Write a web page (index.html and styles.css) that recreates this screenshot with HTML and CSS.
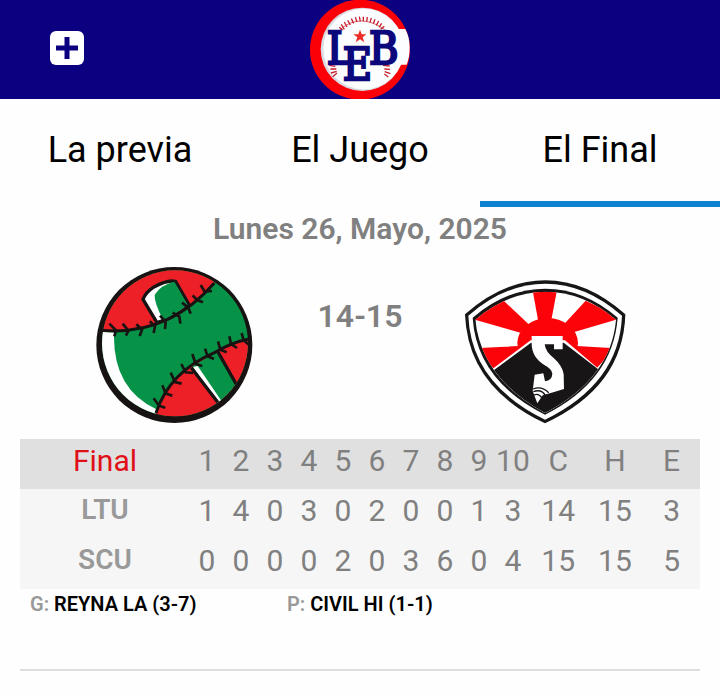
FILE: index.html
```html
<!DOCTYPE html>
<html lang="es">
<head>
<meta charset="utf-8">
<meta name="viewport" content="width=device-width, initial-scale=1">
<title>El Final</title>
<link rel="stylesheet" href="styles.css">
</head>
<body>
<header class="topbar">
  <button class="add" type="button" aria-label="Agregar">
    <svg viewBox="0 0 34 34" width="34" height="34" aria-hidden="true">
      <rect width="34" height="34" rx="6" fill="#fff"/>
      <path d="M17 6v22M6 17h22" stroke="#0a0080" stroke-width="5"/>
    </svg>
  </button>
  <svg class="league" viewBox="0 0 360 297" width="120" height="99" role="img" aria-label="LEB">
    <circle cx="180" cy="149" r="150" fill="#fb0006"/>
    <circle cx="187" cy="148" r="125" fill="#d9dbe3"/>
    <circle cx="191" cy="147" r="121" fill="#fcfdfe"/>
    <path d="M270 87H316Q329 112 329 142Q329 172 320 194H270Z" fill="#fcfdfe"/>
    <path d="M121 88Q180 38 254 88" fill="none" stroke="#c8202c" stroke-width="2"/>
    <g class="stitch">
      <path d="M118 82l10 9M124 73l9 15M133 66l8 15M143 61l8 14M154 56l7 14M166 52l5 14M178 50l3 14M190 50l0 14M202 51l-2 14M214 54l-4 13M225 58l-5 13M236 63l-7 13M245 70l-8 12M253 79l-11 9"/>
      <path d="M88 196l18 3M91 207l18 0M93 219l17-5M98 230l13-11M249 196l20 2M253 207l17 1M254 215l17 6M253 222l12 9"/>
    </g>
    <path d="M180 89l5 14h14l-11 9 5 15-13-9-13 9 5-15-12-9h15z" fill="#f02b25"/>
    <g class="monogram">
      <text x="80" y="191" font-size="134">L</text>
      <text x="207" y="191" font-size="134">B</text>
      <text x="128" y="241" font-size="134">E</text>
    </g>
  </svg>
</header>

<nav class="tabs" aria-label="Secciones del juego">
  <a class="tab" href="#previa">La previa</a>
  <a class="tab" href="#juego">El Juego</a>
  <a class="tab active" href="#final" aria-current="page">El Final</a>
</nav>

<main id="final" class="game">
  <h1 class="date">Lunes 26, Mayo, 2025</h1>

  <section class="matchup">
    <svg class="team" viewBox="0 0 540 540" role="img" aria-label="LTU">
      <defs><clipPath id="ball"><circle cx="270" cy="265" r="219"/></clipPath></defs>
      <circle cx="268" cy="270" r="234" fill="#171312"/>
      <g clip-path="url(#ball)">
        <rect x="30" y="30" width="480" height="480" fill="#079347"/>
        <path d="M30 226V30H388V84Q250 243 50 226Z" fill="#ed2027"/>
        <path d="M30 230L87 232Q82 400 213 462L209 500H30Z" fill="#fff"/>
        <path d="M213 474C240 390 300 330 390 292Q440 262 493 252H520V510H213Z" fill="#ed2027"/>
        <path d="M321 335L399 288L470 410L410 460Z" fill="#079347"/>
        <path d="M324 336L338 333L411 440L400 450Z" fill="#fff"/>
        <path d="M216 203L174 133Q182 112 205 97Q250 72 272 80L313 151Q265 190 216 203Z" fill="#fff" stroke="#171312" stroke-width="10"/>
        <path d="M235 196Q207 142 209 119Q228 89 268 80L308 149Q270 178 235 196Z" fill="#079347"/>
        <path d="M319 338L400 444M399 291L455 390" fill="none" stroke="#171312" stroke-width="10"/>
      </g>
      <g class="seam">
        <path d="M50 226Q250 243 388 84M213 474C240 390 300 330 390 292Q440 262 493 252" stroke-width="9"/>
        <path d="M73 206l20 20-5 18M113 206l17 21-7 15M154 208l17 16-7 19M194 199l16 14-4 21M225 182l17 19-2 21M263 173l20 12 3 21M291 143l19 15 7 18M323 121l13 14 18 7M347 90l12 20 22-2"/>
        <path d="M206 430l16 22 19 6M232 391l10 24 20 7M257 353l13 28 20 5M289 327l13 25 22 2M322 297l10 30 20 6M360 281l8 23 19 8M399 259l7 25 19 8M433 244l5 23 18 12M470 234l6 22 16 13"/>
      </g>
    </svg>

    <p class="score">14-15</p>

    <svg class="team" viewBox="0 0 540 540" role="img" aria-label="SCU">
      <defs><clipPath id="shield"><path d="M61 194Q160 110 272 110Q384 110 483 194Q468 370 270 474Q79 370 61 194Z"/></clipPath></defs>
      <path d="M30 178Q145 76 271 76Q396 76 511 178Q505 396 270 505Q38 396 30 178Z" fill="#171515"/>
      <path d="M40 182Q151 86 271 86Q391 86 501 182Q493 385 270 494Q48 385 40 182Z" fill="#fff"/>
      <path d="M53 188Q155 101 271 101Q387 101 488 188Q474 376 270 479Q65 376 53 188Z" fill="#171515"/>
      <g clip-path="url(#shield)">
        <path d="M30 80H510V500H30Z" fill="#fff"/>
        <g fill="#fc0309">
          <path d="M230 90H309L288 200H250Z"/>
          <path d="M146 137L60 180V194L196 233L221 208Z"/>
          <path d="M392 137L484 180V194L350 233L327 208Z"/>
          <path d="M60 280L190 273L236 262L120 345Z"/>
          <path d="M480 280L366 273L320 262L420 345Z"/>
          <ellipse cx="278" cy="264" rx="91" ry="75"/>
        </g>
        <path d="M227 256L100 351V500H450V358L330 256Z" fill="#fff"/>
        <path d="M228 263L100 358V500H460V366L326 263Z" fill="#171515"/>
      </g>
      <path d="M230 243H323V283H297V268H269Q272 291 296 309Q321 331 326 357L327 402L295 412L263 421L247 445L233 408L239 359L265 355L270 379Q291 376 292 356Q292 343 268 330Q230 307 230 265Z" fill="#fff"/>
      <path d="M234 402Q260 392 281 413M235 410Q259 401 271 421M237 420Q251 414 260 428" fill="none" stroke="#171515" stroke-width="4"/>
    </svg>
  </section>

  <table class="linescore">
    <thead>
      <tr><th class="name" scope="col">Final</th><th scope="col">1</th><th scope="col">2</th><th scope="col">3</th><th scope="col">4</th><th scope="col">5</th><th scope="col">6</th><th scope="col">7</th><th scope="col">8</th><th scope="col">9</th><th scope="col">10</th><th class="total" scope="col">C</th><th class="total" scope="col">H</th><th class="total" scope="col">E</th></tr>
    </thead>
    <tbody>
      <tr><th scope="row">LTU</th><td>1</td><td>4</td><td>0</td><td>3</td><td>0</td><td>2</td><td>0</td><td>0</td><td>1</td><td>3</td><td>14</td><td>15</td><td>3</td></tr>
      <tr><th scope="row">SCU</th><td>0</td><td>0</td><td>0</td><td>0</td><td>2</td><td>0</td><td>3</td><td>6</td><td>0</td><td>4</td><td>15</td><td>15</td><td>5</td></tr>
    </tbody>
  </table>

  <dl class="pitchers">
    <div><dt>G:</dt> <dd>REYNA LA (3-7)</dd></div>
    <div><dt>P:</dt> <dd>CIVIL HI (1-1)</dd></div>
  </dl>
</main>
</body>
</html>
```
FILE: styles.css
```css
* {
  box-sizing: border-box;
}

body {
  margin: 0;
  background: #fefefe;
  color: #808080;
  font-family: Roboto, "Liberation Sans", sans-serif;
}

.topbar {
  display: grid;
  grid-template-columns: 1fr auto 1fr;
  align-items: center;
  background: #0a0080;
}

.add {
  justify-self: start;
  margin: 0 0 4px 50px;
  padding: 0;
  border: 0;
  background: none;
  line-height: 0;
}

.league {
  display: block;
}

.stitch {
  fill: none;
  stroke: #c8202c;
  stroke-width: 4;
}

.monogram {
  fill: #0b087c;
  stroke: #0b087c;
  stroke-width: 7px;
  font-family: "DejaVu Serif Condensed", "DejaVu Serif", serif;
}

.seam {
  fill: none;
  stroke: #171312;
  stroke-width: 8;
}

.tabs {
  display: grid;
  grid-template-columns: repeat(3, 1fr);
}

.tab {
  padding: 30px 0 30px;
  border-bottom: 6px solid transparent;
  color: #000;
  font-size: 36px;
  line-height: 42px;
  text-align: center;
  text-decoration: none;
}

.tab.active {
  border-color: #0f83d2;
}

.game {
  padding: 0 20px;
}

.date {
  margin: 4px 0 0;
  font-size: 30px;
  font-weight: 600;
  line-height: 36px;
  text-align: center;
}

.matchup {
  display: flex;
  justify-content: center;
  padding-top: 8px;
}

.team {
  width: 180px;
  height: 180px;
}

.score {
  width: 190px;
  margin: 41px 0 0;
  font-size: 32px;
  font-weight: 600;
  line-height: 40px;
  text-align: center;
}

.linescore {
  width: 100%;
  margin-top: 4px;
  border-collapse: collapse;
  table-layout: fixed;
  background: #f6f6f6;
  font-size: 30px;
  line-height: 44px;
  text-align: center;
}

.linescore th,
.linescore td {
  width: 5%;
  padding: 0 0 6px;
  font-weight: 400;
}

.linescore thead {
  background: #e0e0e0;
}

.linescore .name {
  width: 25%;
  color: #e01018;
}

.linescore .total {
  width: calc(25% / 3);
}

.linescore tbody th {
  padding-bottom: 8px;
  color: #999;
  font-size: 28px;
  font-weight: 600;
  line-height: 42px;
}

.pitchers {
  display: grid;
  grid-template-columns: 257px 1fr;
  margin: 0;
  padding: 4px 10px 54px;
  border-bottom: 2px solid #dedede;
  font-size: 20px;
  font-weight: 600;
  line-height: 22px;
}

.pitchers dt,
.pitchers dd {
  display: inline;
  margin: 0;
}

.pitchers dt {
  color: #999;
}

.pitchers dd {
  color: #000;
}
```
